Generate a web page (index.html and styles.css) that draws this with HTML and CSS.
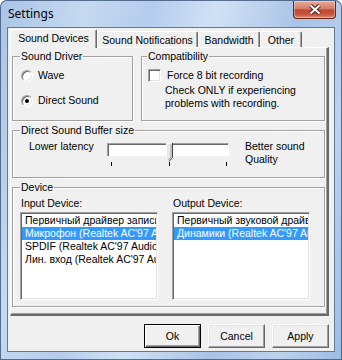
FILE: index.html
```html
<!DOCTYPE html>
<html>
<head>
    <title>Settings</title>
    <link rel="stylesheet" href="styles.css">
</head>
<body>
    <div class="window">
        <div class="titlebar">
            <span class="title">Settings</span>
            <div class="close-button">
                <svg width="14" height="11" viewBox="0 0 14 11">
                    <path d="M2.5 1.5 L11.5 9.5 M11.5 1.5 L2.5 9.5" stroke="#5a1f16" stroke-width="4" fill="none"/>
                    <path d="M2.5 1.5 L11.5 9.5 M11.5 1.5 L2.5 9.5" stroke="#fff" stroke-width="2" fill="none"/>
                </svg>
            </div>
        </div>
        <div class="client">
            <div class="tabs">
                <div class="tab active" style="width: 87px">Sound Devices</div>
                <div class="tab" style="width: 101px">Sound Notifications</div>
                <div class="tab" style="width: 62px">Bandwidth</div>
                <div class="tab" style="width: 42px">Other</div>
            </div>
            <div class="panel">
                <div class="row">
                    <fieldset class="group driver">
                        <legend>Sound Driver</legend>
                        <div class="option"><span class="radio"></span>Wave</div>
                        <div class="option"><span class="radio checked"></span>Direct Sound</div>
                    </fieldset>
                    <fieldset class="group compat">
                        <legend>Compatibility</legend>
                        <div class="option"><span class="checkbox"></span>Force 8 bit recording</div>
                        <div class="note">Check ONLY if experiencing<br>problems with recording.</div>
                    </fieldset>
                </div>
                <fieldset class="group buffer">
                    <legend>Direct Sound Buffer size</legend>
                    <div class="buffer-row">
                        <div class="latency">Lower latency</div>
                        <div class="slider">
                            <div class="track">
                                <svg class="thumb" width="7" height="19" viewBox="0 0 7 19">
                                    <polygon points="0,0 6,0 6,14 3,18 0,15" fill="#e8e8e8"/>
                                    <polyline points="0.5,15 0.5,0.5 5.5,0.5" stroke="#fff" fill="none"/>
                                    <polyline points="5,1 5,14 2.5,17" stroke="#a0a0a0" fill="none"/>
                                    <polyline points="6.5,0 6.5,14.5 3,18.5" stroke="#404040" fill="none"/>
                                </svg>
                            </div>
                            <div class="ticks"><span></span><span></span><span></span></div>
                        </div>
                        <div class="quality">Better sound<br>Quality</div>
                    </div>
                </fieldset>
                <fieldset class="group device">
                    <legend>Device</legend>
                    <div class="device-row">
                        <div class="device-col">
                            <div class="device-label">Input Device:</div>
                            <div class="listbox">
                                <div class="item">Первичный драйвер записи звука</div>
                                <div class="item selected">Микрофон (Realtek AC'97 Audio)</div>
                                <div class="item">SPDIF (Realtek AC'97 Audio)</div>
                                <div class="item">Лин. вход (Realtek AC'97 Audio)</div>
                            </div>
                        </div>
                        <div class="device-col">
                            <div class="device-label">Output Device:</div>
                            <div class="listbox">
                                <div class="item">Первичный звуковой драйвер</div>
                                <div class="item selected">Динамики (Realtek AC'97 Audio)</div>
                            </div>
                        </div>
                    </div>
                </fieldset>
            </div>
            <div class="buttons">
                <button class="button default">Ok</button>
                <button class="button">Cancel</button>
                <button class="button">Apply</button>
            </div>
        </div>
    </div>
</body>
</html>
```

FILE: styles.css
```css
body {
    margin: 0;
    font-family: "Liberation Sans", Arial, sans-serif;
    font-size: 10.5px;
    line-height: 13px;
    color: #000;
}
.window {
    width: 342px;
    height: 360px;
    box-sizing: border-box;
    padding: 0 7px 8px 7px;
    border-radius: 7px 7px 0 0;
    background: linear-gradient(105deg, #a9c4e6 0%, #c5d9f0 20%, #b4cced 35%, #d0e1f4 50%, #a8c3e6 70%, #bcd2ee 85%, #9dbce3 100%);
    box-shadow: inset 0 0 0 1px rgba(50, 75, 110, 0.75);
}
.titlebar {
    height: 27px;
    display: flex;
    justify-content: space-between;
    align-items: flex-start;
}
.title {
    font-family: "Noto Sans", sans-serif;
    font-size: 12px;
    line-height: 16px;
    padding-top: 6px;
    margin-left: 1px;
}
.close-button {
    width: 43px;
    height: 18px;
    margin-top: 1px;
    margin-right: -1px;
    box-sizing: border-box;
    border: 1px solid #6a2418;
    border-top: none;
    border-radius: 0 0 4px 4px;
    background: linear-gradient(#e8ab98 0%, #d47c66 45%, #c2472f 52%, #c65640 80%, #e0917a 100%);
    box-shadow: inset 0 0 0 1px rgba(255, 255, 255, 0.35);
    display: flex;
    align-items: center;
    justify-content: center;
}
.client {
    height: 325px;
    box-sizing: border-box;
    border: 1px solid #62789a;
    background: #f0f0f0;
    padding: 0 5px 0 2px;
}
.tabs {
    display: flex;
    align-items: flex-end;
    height: 18px;
    margin-top: 1px;
}
.tab {
    height: 16px;
    box-sizing: border-box;
    padding-top: 2px;
    text-align: center;
    white-space: nowrap;
    border: 1px solid #fff;
    border-bottom: none;
    border-right-color: #696969;
    border-radius: 2px 2px 0 0;
    box-shadow: inset -1px 0 #a0a0a0;
}
.tab.active {
    height: 19px;
    padding-top: 2px;
    margin-bottom: -1px;
    position: relative;
    z-index: 1;
    background: #f0f0f0;
}
.panel {
    height: 269px;
    box-sizing: border-box;
    border: 1px solid #fff;
    border-right: 2px solid #696969;
    border-bottom: 2px solid #696969;
    box-shadow: inset -1px -1px #a0a0a0;
    padding: 2px 2px 0 1px;
}
.row {
    display: flex;
    gap: 8px;
}
.group {
    margin: 0;
    min-width: 0;
    box-sizing: border-box;
    border: 1px solid #a0a0a0;
    box-shadow: inset 1px 1px #fff, 1px 1px #fff;
    padding: 0 0 0 8px;
}
.group legend {
    padding: 0 1px;
    margin-left: -1px;
    line-height: 13px;
    background: #f0f0f0;
}
.driver {
    width: 121px;
    height: 71px;
    padding-top: 6px;
}
.compat {
    width: 184px;
    height: 71px;
    padding: 6px 0 0 6px;
}
.option {
    display: flex;
    align-items: center;
    height: 13px;
    white-space: nowrap;
}
.driver .option {
    margin-bottom: 12px;
}
.radio {
    width: 12px;
    height: 12px;
    box-sizing: border-box;
    margin-right: 5px;
    border-radius: 50%;
    border: 1px solid;
    border-color: #a0a0a0 #fff #fff #a0a0a0;
    box-shadow: inset 1px 1px #696969, inset -1px -1px #e3e3e3;
    background: #fff;
    display: flex;
    align-items: center;
    justify-content: center;
}
.radio.checked::after {
    content: "";
    width: 4px;
    height: 4px;
    border-radius: 50%;
    background: #000;
}
.checkbox {
    width: 13px;
    height: 13px;
    box-sizing: border-box;
    margin-right: 6px;
    border: 1px solid;
    border-color: #a0a0a0 #fff #fff #a0a0a0;
    box-shadow: inset 1px 1px #696969, inset -1px -1px #e3e3e3;
    background: #fff;
}
.note {
    margin: 2px 0 0 17px;
    white-space: nowrap;
}
.buffer {
    height: 54px;
    margin-top: 3px;
    padding-top: 3px;
}
.buffer-row {
    display: flex;
    align-items: flex-start;
    margin-left: 8px;
}
.latency {
    width: 78px;
    white-space: nowrap;
}
.slider {
    width: 122px;
    margin-top: 3px;
}
.track {
    height: 13px;
    box-sizing: border-box;
    position: relative;
    background: #fff;
    border: 1px solid;
    border-color: #a0a0a0 #fff #fff #a0a0a0;
    border-bottom: none;
    box-shadow: inset 1px 1px #696969;
}
.thumb {
    position: absolute;
    left: 58px;
    top: -1px;
}
.ticks {
    display: flex;
    justify-content: space-between;
    padding: 0 2px 0 4px;
    margin-top: 6px;
}
.ticks span {
    width: 1px;
    height: 4px;
    background: #000;
}
.quality {
    margin-left: 16px;
    white-space: nowrap;
}
.device {
    height: 126px;
    margin-top: 3px;
    padding-top: 3px;
}
.device-row {
    display: flex;
    gap: 14px;
    margin-left: -1px;
}
.device-col {
    width: 138px;
}
.device-label {
    margin-left: 1px;
}
.listbox {
    height: 88px;
    margin-top: 2px;
    box-sizing: border-box;
    background: #fff;
    border: 1px solid;
    border-color: #a0a0a0 #fff #fff #a0a0a0;
    box-shadow: inset 1px 1px #696969, inset -1px -1px #e3e3e3;
    padding: 1px 1px 1px 1px;
    overflow: hidden;
}
.item {
    height: 13px;
    padding-left: 3px;
    white-space: nowrap;
    overflow: hidden;
}
.item.selected {
    background: #3399ff;
    color: #fff;
}
.buttons {
    display: flex;
    justify-content: flex-end;
    gap: 7px;
    margin-top: 8px;
}
.button {
    width: 57px;
    height: 24px;
    padding: 0;
    font-family: "Liberation Sans", Arial, sans-serif;
    font-size: 10.5px;
    color: #000;
    background: #f0f0f0;
    border: 1px solid;
    border-color: #fff #696969 #696969 #fff;
    box-shadow: inset -1px -1px #a0a0a0, inset 1px 1px #e3e3e3;
}
.button.default {
    border-color: #000;
    box-shadow: inset 1px 1px #fff, inset -1px -1px #696969, inset -2px -2px #a0a0a0;
}
```
